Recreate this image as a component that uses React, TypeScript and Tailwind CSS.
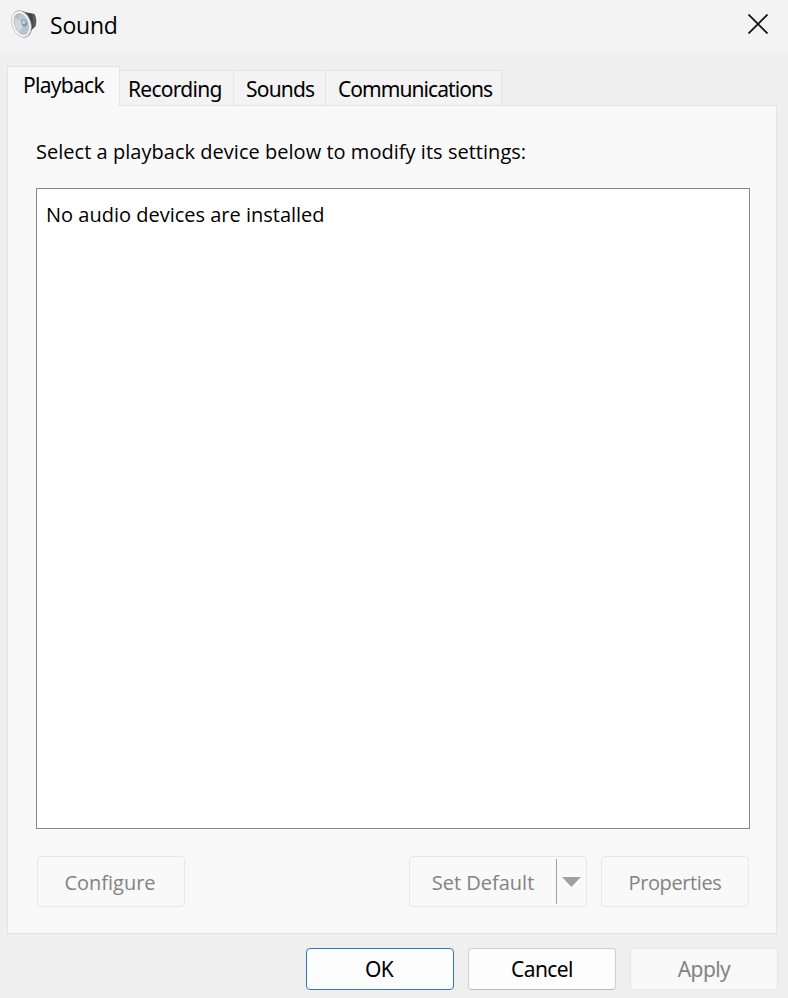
import type { ReactNode } from "react";

const uiFont = "font-['Open_Sans','Noto_Sans',sans-serif]";
const tabFont = "font-['Noto_Sans','Open_Sans',sans-serif]";

function SpeakerIcon() {
  return (
    <svg width="28" height="30" viewBox="0 0 28 30" aria-hidden="true">
      <defs>
        <linearGradient id="cone" x1="0" y1="0" x2="0.6" y2="1">
          <stop offset="0" stopColor="#a3abb1" />
          <stop offset="0.4" stopColor="#bcc7cf" />
          <stop offset="1" stopColor="#b4c3ce" />
        </linearGradient>
        <linearGradient id="magnet" x1="0" y1="0" x2="1" y2="0">
          <stop offset="0" stopColor="#6b6d6f" />
          <stop offset="0.6" stopColor="#3d3f41" />
          <stop offset="1" stopColor="#55575a" />
        </linearGradient>
      </defs>
      <path d="M11 2 L16 3.5 L23.5 5 Q26.5 11 24.5 17.5 L21 20.5 L18 26 Z" fill="url(#magnet)" />
      <path d="M22 5.5 Q24.5 12 22.5 18.5" fill="none" stroke="#7d8082" strokeWidth="0.6" />
      <ellipse cx="10.8" cy="15" rx="9.5" ry="13.9" transform="rotate(-19 10.8 15)" fill="#808486" />
      <ellipse cx="10.3" cy="15" rx="9.3" ry="13.5" transform="rotate(-19 10.3 15)" fill="#fbfbfb" stroke="#a9acae" strokeWidth="0.5" />
      <ellipse cx="10.4" cy="15" rx="7.3" ry="11.4" transform="rotate(-19 10.4 15)" fill="url(#cone)" />
      <path d="M3.5 9 L12.5 14 L11 19 L8 23 Q2.5 17 3.5 9Z" fill="#dce2e6" opacity="0.6" />
      <ellipse cx="13.2" cy="14" rx="2.8" ry="3.7" transform="rotate(-19 13.2 14)" fill="#8298a8" />
      <ellipse cx="12.8" cy="13.2" rx="1.6" ry="2" fill="#c9d6df" />
    </svg>
  );
}

function Tab({ className, children }: { className: string; children: ReactNode }) {
  return (
    <button
      className={`${tabFont} h-9 border-t border-r border-b border-[#e4e4e4] bg-[#f3f3f3] pb-px text-left text-[21px] leading-9 whitespace-nowrap ${className}`}
    >
      {children}
    </button>
  );
}

function PanelButton({ className = "", children }: { className?: string; children: ReactNode }) {
  return (
    <button
      className={`flex h-[51px] w-[148px] items-center justify-center rounded border border-[#e8e8e8] bg-[#f9f9f9] pt-0.5 text-[20px] whitespace-nowrap text-[#838383] ${className}`}
    >
      {children}
    </button>
  );
}

export default function App() {
  return (
    <div className={`${uiFont} flex h-[998px] w-[788px] flex-col overflow-hidden bg-[#efefef] text-black`}>
      <header className="flex h-[53px] shrink-0 items-start bg-[#f3f3f3]">
        <div className="mt-[9px] ml-[11px] h-[30px] w-7">
          <SpeakerIcon />
        </div>
        <h1 className="mt-[9px] ml-[11px] text-[23px] leading-8 tracking-[-0.2px]">Sound</h1>
        <button aria-label="Close" className="mt-3.5 mr-5 ml-auto">
          <svg width="20" height="20" viewBox="0 0 20 20" fill="none" stroke="#111" strokeWidth="1.8">
            <path d="M0.5 0.5 L19.5 19.5 M19.5 0.5 L0.5 19.5" />
          </svg>
        </button>
      </header>

      <main className="mt-[13px] mr-[11px] ml-[7px] flex h-[868px] shrink-0 flex-col">
        <nav className="z-10 -mb-px flex h-10 shrink-0 items-end">
          <button
            className={`${tabFont} h-10 w-[113px] border-t border-r border-l border-[#e4e4e4] bg-[#f9f9f9] pb-1 pl-[15px] text-left text-[21px] leading-9 tracking-[-0.7px] whitespace-nowrap`}
          >
            Playback
          </button>
          <Tab className="w-[114px] pl-2 tracking-[-0.72px]">Recording</Tab>
          <Tab className="w-[92px] pl-3 tracking-[-0.8px]">Sounds</Tab>
          <Tab className="w-[176px] pl-3 tracking-[-0.93px]">Communications</Tab>
        </nav>
        <section className="flex h-[829px] flex-col border border-[#e4e4e4] bg-[#f9f9f9] px-7">
          <p className="mt-[30px] h-8 text-[20px] leading-8 tracking-[0.03px] whitespace-nowrap">
            Select a playback device below to modify its settings:
          </p>
          <div className="mt-5 h-[641px] w-[714px] border border-[#828790] bg-white pt-2.5 pl-[9px] text-[20px] leading-8">
            No audio devices are installed
          </div>
          <div className="mt-[27px] flex w-[713px] pl-px">
            <PanelButton className="pr-0.5">Configure</PanelButton>
            <div className="ml-auto flex h-[51px] w-[178px] items-center rounded border border-[#e8e8e8] bg-[#f9f9f9] text-[#838383]">
              <button className="w-[146px] pt-0.5 text-center text-[20px] whitespace-nowrap">Set Default</button>
              <span className="h-[45px] w-px bg-[#a0a0a0]" />
              <button aria-label="More options" className="mt-0.5 ml-[5px]">
                <svg width="21" height="12" viewBox="0 0 21 12">
                  <path d="M1 1 H21 L11 12Z" fill="#fff" />
                  <path d="M0 0 H19 L9.5 10Z" fill="#a0a0a0" />
                </svg>
              </button>
            </div>
            <PanelButton className="ml-3.5 tracking-[-0.4px]">Properties</PanelButton>
          </div>
        </section>
      </main>

      <footer className={`${tabFont} mt-3.5 mr-2.5 flex justify-end gap-3.5 text-[21px] leading-8 tracking-[-0.6px]`}>
        <button className="h-[42px] w-[148px] rounded border border-[#2f76c5] bg-[#fdfdfd] pr-0.5 tracking-[-0.8px]">OK</button>
        <button className="h-[42px] w-[148px] rounded border border-[#d0d0d0] border-b-[#bcbcbc] bg-[#fdfdfd]">Cancel</button>
        <button className="h-[42px] w-[148px] rounded border border-[#e8e8e8] bg-[#f9f9f9] text-[#838383]">Apply</button>
      </footer>
    </div>
  );
}
